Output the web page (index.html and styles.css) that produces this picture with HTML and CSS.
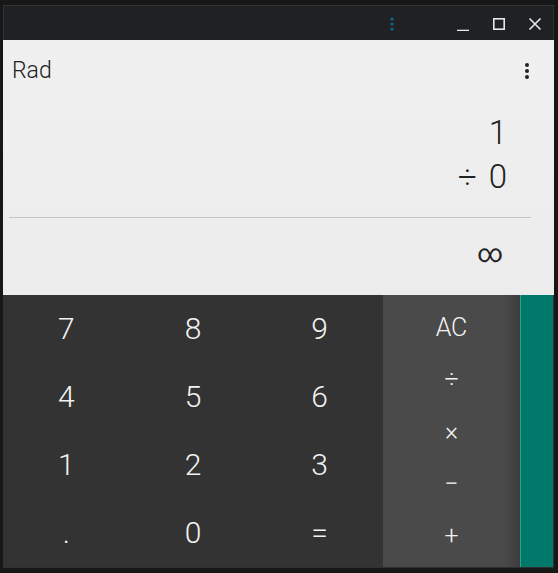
FILE: index.html
```html
<!DOCTYPE html>
<html>
<head>
<meta charset="utf-8">
<link rel="stylesheet" href="styles.css">
</head>
<body>
<div class="window">
  <div class="titlebar">
    <svg class="tb-icon" width="14" height="14" viewBox="0 0 14 14"><circle cx="7" cy="2" r="1.6" fill="#0e6a86"/><circle cx="7" cy="7" r="1.6" fill="#0e6a86"/><circle cx="7" cy="12" r="1.6" fill="#0e6a86"/></svg>
    <svg class="tb-btn" width="14" height="14" viewBox="0 0 14 14"><path d="M1 13.5H13" stroke="#e8e8e8" stroke-width="1.6"/></svg>
    <svg class="tb-btn" width="14" height="14" viewBox="0 0 14 14"><rect x="1.8" y="1.8" width="10.4" height="10.4" fill="none" stroke="#e8e8e8" stroke-width="1.6"/></svg>
    <svg class="tb-btn" width="14" height="14" viewBox="0 0 14 14"><path d="M1.5 1.5L12.5 12.5M12.5 1.5L1.5 12.5" stroke="#e8e8e8" stroke-width="1.6"/></svg>
  </div>
  <div class="display">
    <div class="toolbar">
      <span class="mode">Rad</span>
      <svg class="menu" width="6" height="16" viewBox="0 0 6 16"><circle cx="3" cy="2" r="2" fill="#222"/><circle cx="3" cy="8" r="2" fill="#222"/><circle cx="3" cy="14" r="2" fill="#222"/></svg>
    </div>
    <div class="formula">
      <div>1</div>
      <div><span class="opsign">÷</span>0</div>
    </div>
    <div class="divider"></div>
    <div class="result">∞</div>
  </div>
  <div class="keypad">
    <div class="numbers">
      <div class="key">7</div><div class="key">8</div><div class="key">9</div>
      <div class="key">4</div><div class="key">5</div><div class="key">6</div>
      <div class="key">1</div><div class="key">2</div><div class="key">3</div>
      <div class="key">.</div><div class="key">0</div><div class="key">=</div>
    </div>
    <div class="ops">
      <div class="op ac">AC</div>
      <div class="op">÷</div>
      <div class="op">×</div>
      <div class="op">−</div>
      <div class="op">+</div>
    </div>
    <div class="drawer"></div>
  </div>
</div>
</body>
</html>
```
FILE: styles.css
```css
html, body {
  margin: 0;
  padding: 0;
  background: #171717;
}
body {
  width: 558px;
  height: 573px;
  overflow: hidden;
  font-family: Roboto, "Noto Sans", sans-serif;
}
.window {
  margin: 5px 0 0 3px;
  width: 551px;
  height: 563px;
  border: 1px solid #2f3031;
  border-top-color: #333436;
  box-sizing: border-box;
  background: #202124;
  display: flex;
  flex-direction: column;
}
.titlebar {
  height: 34px;
  flex: none;
  display: flex;
  align-items: center;
  justify-content: flex-end;
  padding-right: 11px;
  padding-top: 1px;
  box-sizing: border-box;
}
.tb-icon {
  margin-right: 35px;
}
.tb-btn {
  margin-left: 22px;
}
.display {
  height: 255px;
  flex: none;
  background: linear-gradient(#f0f0f0, #ececec);
  display: flex;
  flex-direction: column;
  margin: 0 -1px;
}
.toolbar {
  height: 61px;
  flex: none;
  display: flex;
  align-items: center;
  justify-content: space-between;
  padding: 0 24px 0 9px;
}
.mode {
  font-size: 23px;
  font-weight: 300;
  color: #222;
}
.formula {
  text-align: right;
  padding-right: 47px;
  font-size: 33px;
  font-weight: 300;
  color: #222;
  line-height: 44px;
  margin-top: 10px;
}
.opsign {
  margin-right: 12px;
}
.divider {
  height: 1px;
  flex: none;
  background: #c4c4c4;
  margin: 18px 23px 0 6px;
}
.result {
  text-align: right;
  padding-right: 51px;
  font-size: 25px;
  color: #222;
  line-height: 72px;
}
.keypad {
  flex: 1;
  display: flex;
  margin-left: -1px;
  background: #333;
}
.numbers {
  width: 380px;
  background: #333333;
  display: grid;
  grid-template-columns: repeat(3, 1fr);
  grid-template-rows: repeat(4, 1fr);
}
.key {
  display: flex;
  align-items: center;
  justify-content: center;
  color: #f2f2f2;
  font-size: 30px;
  font-weight: 300;
  padding-bottom: 2px;
}
.ops {
  width: 137px;
  background: linear-gradient(to right, #4a4a4a 0, #4a4a4a 121px, #3c3c3c 137px);
  display: flex;
  flex-direction: column;
  padding: 7px 0 6px;
  box-sizing: border-box;
}
.op {
  flex: 1;
  display: flex;
  align-items: center;
  justify-content: center;
  color: #f2f2f2;
  font-size: 25px;
  font-weight: 300;
}
.op.ac {
  font-size: 25px;
}
.drawer {
  flex: 1;
  background: #00796b;
  border-left: 1px solid #26a48e;
}
```
